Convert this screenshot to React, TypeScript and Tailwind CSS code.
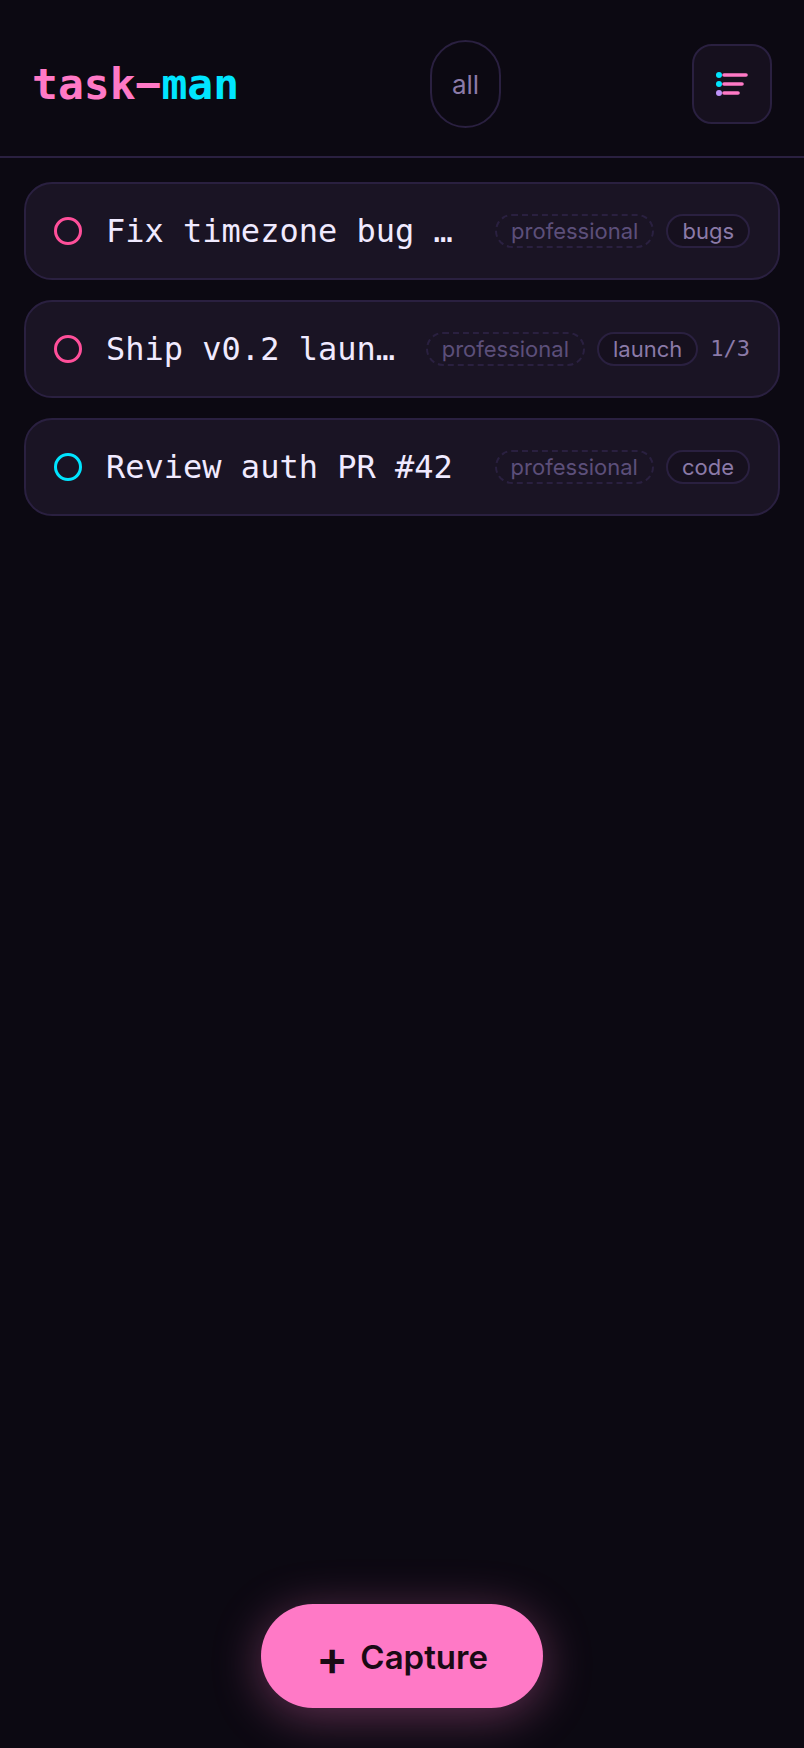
interface Task {
  id: number;
  title: string;
  priority: 'high' | 'normal';
  area: string;
  tag: string;
  progress?: string;
}

const TASKS: Task[] = [
  { id: 1, title: 'Fix timezone bug #88', priority: 'high', area: 'professional', tag: 'bugs' },
  { id: 2, title: 'Ship v0.2 launch', priority: 'high', area: 'professional', tag: 'launch', progress: '1/3' },
  { id: 3, title: 'Review auth PR #42', priority: 'normal', area: 'professional', tag: 'code' },
];

const RING = {
  high: 'border-[#ff4f9a]',
  normal: 'border-[#00e5ff]',
};

function ListIcon() {
  return (
    <svg width="40" height="40" viewBox="0 0 40 40" fill="none" aria-hidden="true">
      <g stroke="#ff79c6" strokeWidth="3.6" strokeLinecap="round">
        <path d="M12 11h22" />
        <path d="M12 20h18" />
        <path d="M12 29h14" />
      </g>
      <circle cx="7" cy="11" r="3" fill="#00e5ff" />
      <circle cx="7" cy="20" r="3" fill="#00e5ff" />
      <circle cx="7" cy="29" r="3" fill="#bd93f9" />
    </svg>
  );
}

function Header() {
  return (
    <header className="flex items-center justify-between border-b-2 border-[#2a2040] px-8 pt-10 pb-7">
      <h1 className="font-['DejaVu_Sans_Mono',monospace] text-[43px] leading-none font-bold text-[#ff79c6]">
        task−<span className="text-[#00e5ff]">man</span>
      </h1>
      <button
        type="button"
        className="h-22 rounded-full border-2 border-[#2a2040] px-5 text-[26px] text-[#8b7aa8]"
      >
        all
      </button>
      <button
        type="button"
        aria-label="Open list"
        className="flex size-20 items-center justify-center rounded-[20px] border-2 border-[#2a2040] bg-[#16101e]"
      >
        <ListIcon />
      </button>
    </header>
  );
}

function TaskRow({ task }: { task: Task }) {
  return (
    <li className="flex items-center gap-6 rounded-[28px] border-2 border-[#2a2040] bg-[#1a1424] px-7 py-6">
      <button
        type="button"
        aria-label={`Complete ${task.title}`}
        className={`size-7 shrink-0 rounded-full border-3 ${RING[task.priority]}`}
      />
      <span className="min-w-0 flex-1 truncate font-['DejaVu_Sans_Mono',monospace] text-[32px] leading-[46px] text-[#f0eaff]">
        {task.title}
      </span>
      <div className="flex shrink-0 items-center gap-3 text-[22px] leading-[30px]">
        <span className="rounded-full border-2 border-dashed border-[#2a2040] px-3.5 text-[#5c4f7a]">{task.area}</span>
        <span className="rounded-full border-2 border-[#2a2040] bg-[#16101e] px-3.5 text-[#8b7aa8]">{task.tag}</span>
        {task.progress && (
          <span className="font-['DejaVu_Sans_Mono',monospace] text-[#8b7aa8]">{task.progress}</span>
        )}
      </div>
    </li>
  );
}

export default function App() {
  return (
    <div className="flex min-h-screen flex-col bg-[#0c0912] font-['Inter',sans-serif]">
      <Header />
      <main className="flex-1 p-6">
        <ul className="flex flex-col gap-5">
          {TASKS.map((task) => (
            <TaskRow key={task.id} task={task} />
          ))}
        </ul>
      </main>
      <footer className="flex justify-center pb-10">
        <button
          type="button"
          className="flex h-26 items-center gap-3 rounded-full bg-[#ff79c6] px-[55px] pt-1 text-[33px] font-semibold text-[#1a0a14] shadow-[0_8px_48px_rgba(255,121,198,0.35)]"
        >
          <span className="text-[48px] leading-none">+</span>
          Capture
        </button>
      </footer>
    </div>
  );
}
